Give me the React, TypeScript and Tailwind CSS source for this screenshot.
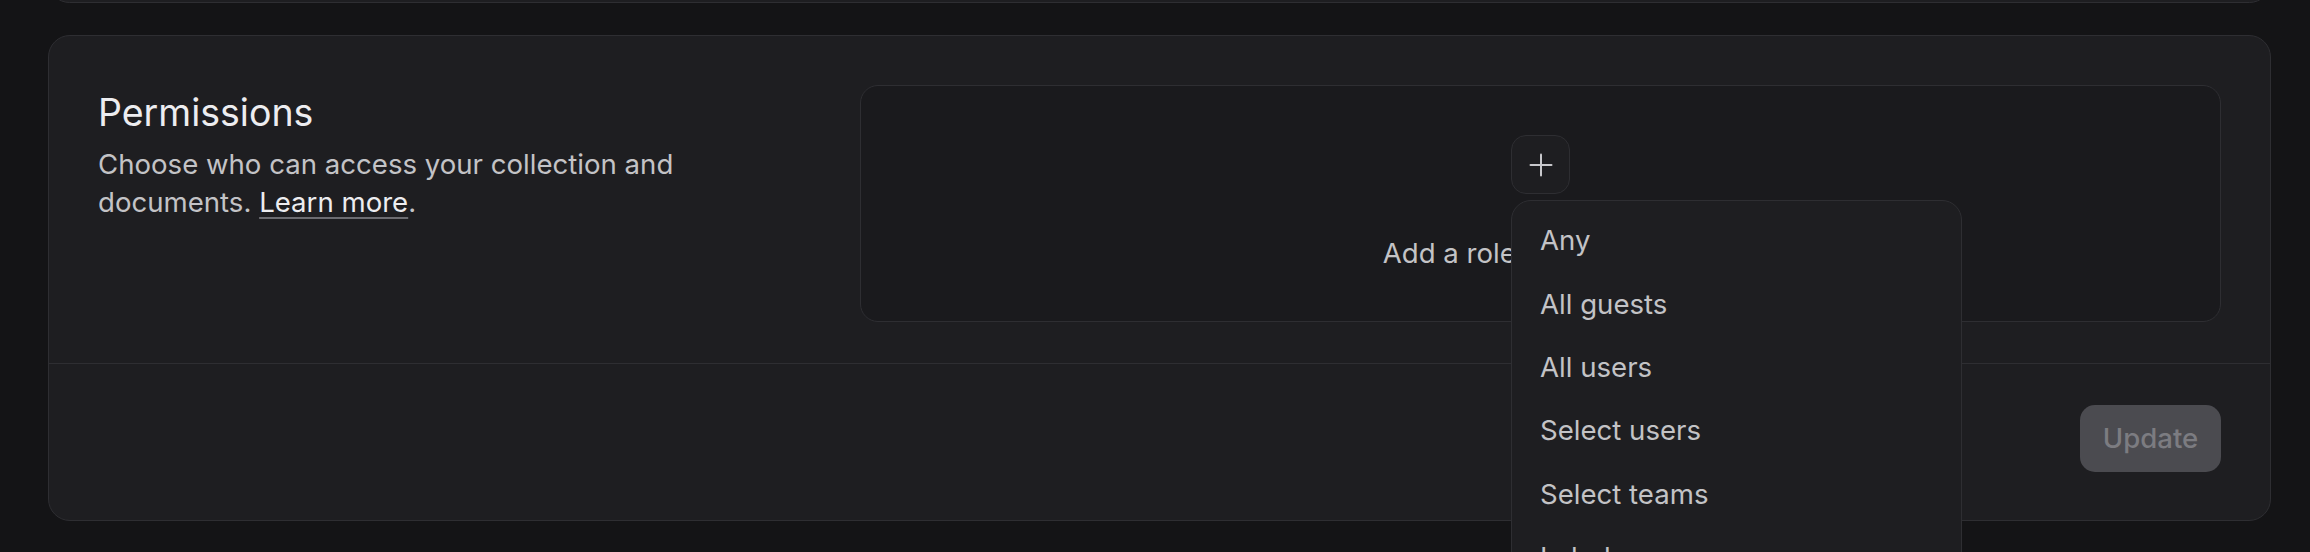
import { useState } from 'react';

const roleOptions = ['Any', 'All guests', 'All users', 'Select users', 'Select teams', 'Label', 'Custom permission'];

const PlusIcon = () => (
  <svg width="24" height="24" viewBox="0 0 24 24" fill="none" stroke="#c8c8cc" strokeWidth="2" strokeLinecap="round">
    <line x1="12" y1="1.5" x2="12" y2="22.5" />
    <line x1="1.5" y1="12" x2="22.5" y2="12" />
  </svg>
);

const App = () => {
  const [open] = useState(true);

  return (
    <div className="h-[552px] overflow-hidden bg-[#141416] pl-[48px] pr-[39px] font-['Inter','Noto_Sans',sans-serif]">
      {/* end of the card above */}
      <div className="h-[3px] overflow-hidden">
        <div className="-mt-[40px] h-[43px] rounded-[22px] border border-[#2e2e32] bg-[#1e1e21]" />
      </div>

      <section className="mt-[32px] rounded-[22px] border border-[#2e2e32] bg-[#1e1e21]">
        {/* Header */}
        <div className="grid grid-cols-[714px_1fr] gap-[48px] px-[49px] pt-[49px] pb-[41px]">
          <div>
            <h2 className="text-[37.5px] leading-[56px] font-normal text-[#ededf0]">
              Permissions
            </h2>
            <p className="mt-[4px] max-w-[610px] text-[27.6px] leading-[38.4px] text-[#c3c3c6]">
              Choose who can access your collection and documents.{' '}
              <a href="#" className="text-[#ededf0] underline decoration-[#6c6c71] decoration-2 underline-offset-[5px]">
                Learn more
              </a>
              .
            </p>
          </div>

          {/* Empty state */}
          <div className="flex flex-col items-center rounded-[18px] border border-[#2e2e32] bg-[#1a1a1d] pt-[49px] pb-[49px]">
            <div className="relative">
              <button className="flex h-[59px] w-[59px] items-center justify-center rounded-[15px] border border-[#2e2e32] bg-[#1e1e21]">
                <PlusIcon />
              </button>
              {open && (
                <div className="absolute left-0 top-[65px] z-10 w-[451px] rounded-[20px] border border-[#2e2e32] bg-[#1e1e21] pt-[8px] pb-[8px]">
                  {roleOptions.map((option) => (
                    <div
                      key={option}
                      className="flex h-[63.3px] items-center px-[28px] text-[27.6px] leading-[38.4px] text-[#c3c3c6]"
                    >
                      {option}
                    </div>
                  ))}
                </div>
              )}
            </div>
            <p className="mt-[40px] text-[27.6px] leading-[38.4px] text-[#c3c3c6]">Add a role to get started</p>
          </div>
        </div>

        {/* Footer */}
        <div className="flex justify-end border-t border-[#2e2e32] px-[49px] pt-[41px] pb-[48px]">
          <button
            disabled
            className="h-[67px] w-[141px] rounded-[15px] bg-[#4b4b50] text-[27.6px] font-medium text-[#7c7c81]"
          >
            Update
          </button>
        </div>
      </section>
    </div>
  );
};

export default App;
